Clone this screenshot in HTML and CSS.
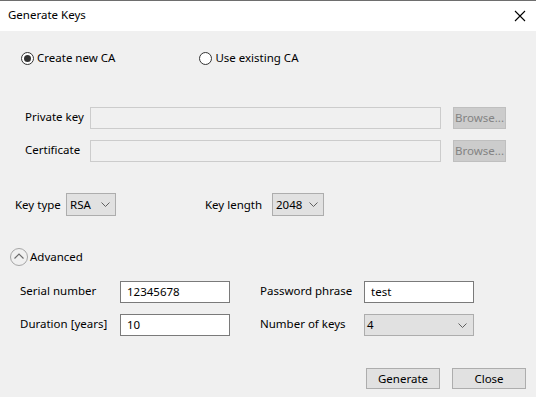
FILE: index.html
```html
<!DOCTYPE html>
<html>
<head>
<meta charset="utf-8">
<link rel="stylesheet" href="styles.css">
</head>
<body>
<div class="window">
  <div class="titlebar">
    <span class="title">Generate Keys</span>
    <svg class="close" width="12" height="12" viewBox="0 0 12 12"><path d="M1 1 L11 11 M11 1 L1 11" stroke="#000" stroke-width="1.1" fill="none"/></svg>
  </div>
  <div class="content">
    <div class="radios">
      <label class="radio"><span class="dot checked"></span>Create new CA</label>
      <label class="radio second"><span class="dot"></span>Use existing CA</label>
    </div>

    <div class="files">
      <span class="lbl">Private key</span>
      <span class="field disabled"></span>
      <span class="browse">Browse...</span>
      <span class="lbl">Certificate</span>
      <span class="field disabled"></span>
      <span class="browse">Browse...</span>
    </div>

    <div class="keyrow">
      <span class="lbl kt">Key type</span>
      <span class="combo c-rsa"><span>RSA</span><svg width="9" height="5" viewBox="0 0 9 5"><path d="M0.5 0.5 L4.5 4.5 L8.5 0.5" stroke="#5f5f5f" fill="none"/></svg></span>
      <span class="lbl kl">Key length</span>
      <span class="combo c-len"><span>2048</span><svg width="9" height="5" viewBox="0 0 9 5"><path d="M0.5 0.5 L4.5 4.5 L8.5 0.5" stroke="#5f5f5f" fill="none"/></svg></span>
    </div>

    <div class="advanced">
      <svg width="20" height="20" viewBox="0 0 20 20"><circle cx="10" cy="10" r="8.5" stroke="#a6a6a6" fill="none"/><path d="M5.5 11.5 L10 7 L14.5 11.5" stroke="#6a6a6a" stroke-width="1.1" fill="none"/></svg>
      <span>Advanced</span>
    </div>

    <div class="adv-grid">
      <span class="lbl">Serial number</span>
      <span class="field">12345678</span>
      <span class="lbl">Password phrase</span>
      <span class="field">test</span>
      <span class="lbl">Duration [years]</span>
      <span class="field">10</span>
      <span class="lbl">Number of keys</span>
      <span class="combo c-num"><span>4</span><svg width="9" height="5" viewBox="0 0 9 5"><path d="M0.5 0.5 L4.5 4.5 L8.5 0.5" stroke="#5f5f5f" fill="none"/></svg></span>
    </div>

    <div class="buttons">
      <span class="btn">Generate</span>
      <span class="btn">Close</span>
    </div>
  </div>
</div>
</body>
</html>
```
FILE: styles.css
```css
* { box-sizing: border-box; }
html, body { margin: 0; padding: 0; }
body {
  width: 536px;
  height: 397px;
  overflow: hidden;
  font-family: "Noto Sans", "Liberation Sans", sans-serif;
  font-size: 11.5px;
  color: #000;
  background: #f0f0f0;
}
.window {
  width: 536px;
  height: 397px;
  display: flex;
  flex-direction: column;
}
.titlebar {
  height: 31px;
  flex: none;
  background: #fff;
  border-top: 1px solid #6e6e6e;
  display: flex;
  align-items: center;
  justify-content: space-between;
  padding: 0 10px 0 8px;
}
.title { line-height: 16px; margin-top: -2px; }
.close { display: block; }
.content {
  flex: 1;
  background: #f0f0f0;
  display: flex;
  flex-direction: column;
  padding-top: 17px;
}
.radios {
  height: 20px;
  display: flex;
  align-items: center;
  padding-left: 21px;
}
.radio { display: flex; align-items: center; gap: 3px; line-height: 16px; margin-top: -1px; }
.radio.second { margin-left: 84px; }
.dot {
  width: 13px;
  height: 13px;
  border: 1px solid #333;
  border-radius: 50%;
  background: #fff;
  display: flex;
  align-items: center;
  justify-content: center;
  margin-top: 1px;
}
.dot.checked::after {
  content: "";
  width: 7px;
  height: 7px;
  border-radius: 50%;
  background: #333;
}
.lbl { white-space: nowrap; line-height: 16px; margin-top: -2px; }
.files {
  margin-top: 39px;
  padding-left: 25px;
  display: grid;
  grid-template-columns: 65px 351px 53px;
  column-gap: 0;
  row-gap: 11px;
  grid-auto-rows: 22px;
  align-items: center;
}
.files .browse { margin-left: 12px; }
.field {
  height: 22px;
  border: 1px solid #7a7a7a;
  background: #fff;
  display: flex;
  align-items: center;
  padding-left: 6px;
  padding-bottom: 1px;
}
.field.disabled {
  background: #f0f0f0;
  border-color: #cccccc;
}
.browse {
  width: 53px;
  height: 22px;
  background: #cccccc;
  border: 1px solid #bfbfbf;
  color: #838383;
  display: flex;
  align-items: center;
  justify-content: center;
  padding-bottom: 1px;
}
.keyrow {
  margin-top: 31px;
  height: 23px;
  display: flex;
  align-items: center;
  padding-left: 15px;
}
.combo {
  height: 23px;
  background: #e1e1e1;
  border: 1px solid #adadad;
  display: flex;
  align-items: center;
  justify-content: space-between;
  padding: 0 5px 1px 3px;
}
.combo svg { display: block; margin-top: 1px; }
.kt { width: 51px; margin-top: 0; }
.c-rsa { width: 50px; }
.kl { margin-left: 89px; width: 67px; margin-top: 0; }
.c-len { width: 52px; }
.advanced {
  margin-top: 31px;
  height: 20px;
  display: flex;
  align-items: center;
  padding-left: 9px;
  gap: 1px;
}
.advanced span { margin-top: -1px; }
.advanced svg { display: block; }
.adv-grid {
  margin-top: 14px;
  padding-left: 20px;
  display: grid;
  grid-template-columns: 100px 110px 134px 110px;
  column-gap: 0;
  row-gap: 11px;
  grid-auto-rows: 22px;
  align-items: center;
}
.adv-grid .lbl:nth-child(3), .adv-grid .lbl:nth-child(7) { margin-left: 30px; }
.c-num { height: 22px; padding-left: 2px; padding-right: 6px; }
.buttons {
  margin-top: 32px;
  display: flex;
  justify-content: flex-end;
  gap: 12px;
  padding-right: 10px;
}
.btn {
  width: 74px;
  height: 21px;
  background: #e1e1e1;
  border: 1px solid #adadad;
  display: flex;
  align-items: center;
  justify-content: center;
  padding-bottom: 1px;
}
```
